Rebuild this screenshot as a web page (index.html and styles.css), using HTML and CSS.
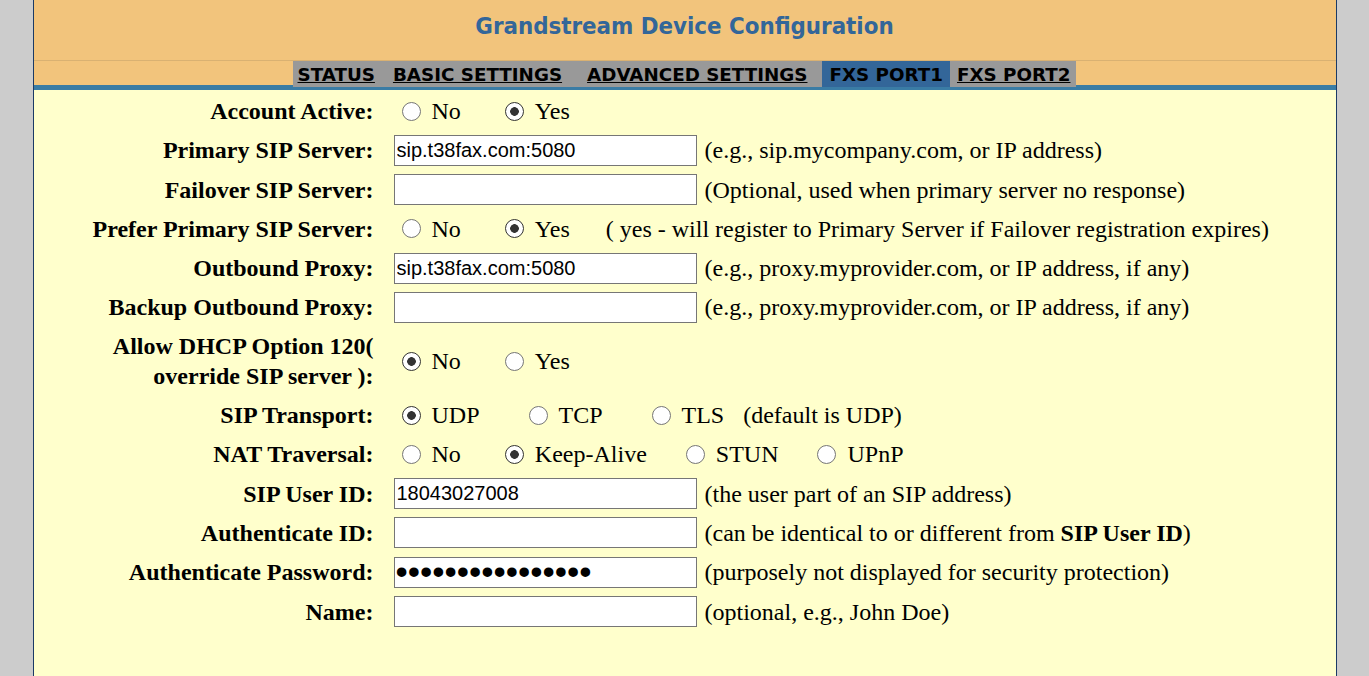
FILE: index.html
```html
<!DOCTYPE html>
<html lang="en">
<head>
<meta charset="utf-8"/>
<title>Grandstream Device Configuration</title>
<link rel="stylesheet" href="styles.css">
<meta content="width=device-width, initial-scale=1.0" name="viewport"/>
</head>
<body>
<div class="page">
  <div class="header">
    <h1>Grandstream Device Configuration</h1>
  </div>
  <nav class="tabs">
    <a class="tab" href="#">STATUS</a>
    <a class="tab" href="#">BASIC SETTINGS</a>
    <a class="tab" href="#">ADVANCED SETTINGS</a>
    <span class="tab tab-active">FXS PORT1</span>
    <a class="tab" href="#">FXS PORT2</a>
  </nav>

  <form class="config">
    <div class="label">Account Active:</div>
    <div class="field">
      <label class="opt"><input type="radio" name="active">No</label>
      <label class="opt"><input type="radio" name="active" checked>Yes</label>
    </div>

    <div class="label">Primary SIP Server:</div>
    <div class="field">
      <input class="text" type="text" value="sip.t38fax.com:5080">
      <span class="hint">(e.g., sip.mycompany.com, or IP address)</span>
    </div>

    <div class="label">Failover SIP Server:</div>
    <div class="field">
      <input class="text" type="text" value="">
      <span class="hint">(Optional, used when primary server no response)</span>
    </div>

    <div class="label">Prefer Primary SIP Server:</div>
    <div class="field">
      <label class="opt"><input type="radio" name="prefer">No</label>
      <label class="opt"><input type="radio" name="prefer" checked>Yes</label>
      <span>( yes - will register to Primary Server if Failover registration expires)</span>
    </div>

    <div class="label">Outbound Proxy:</div>
    <div class="field">
      <input class="text" type="text" value="sip.t38fax.com:5080">
      <span class="hint">(e.g., proxy.myprovider.com, or IP address, if any)</span>
    </div>

    <div class="label">Backup Outbound Proxy:</div>
    <div class="field">
      <input class="text" type="text" value="">
      <span class="hint">(e.g., proxy.myprovider.com, or IP address, if any)</span>
    </div>

    <div class="label">Allow DHCP Option 120(<br>override SIP server ):</div>
    <div class="field">
      <label class="opt"><input type="radio" name="dhcp" checked>No</label>
      <label class="opt"><input type="radio" name="dhcp">Yes</label>
    </div>

    <div class="label">SIP Transport:</div>
    <div class="field">
      <label class="opt opt-wide"><input type="radio" name="transport" checked>UDP</label>
      <label class="opt opt-wide"><input type="radio" name="transport">TCP</label>
      <label class="opt opt-close"><input type="radio" name="transport">TLS</label>
      <span>(default is UDP)</span>
    </div>

    <div class="label">NAT Traversal:</div>
    <div class="field">
      <label class="opt"><input type="radio" name="nat">No</label>
      <label class="opt opt-mid"><input type="radio" name="nat" checked>Keep-Alive</label>
      <label class="opt opt-mid"><input type="radio" name="nat">STUN</label>
      <label class="opt"><input type="radio" name="nat">UPnP</label>
    </div>

    <div class="label">SIP User ID:</div>
    <div class="field">
      <input class="text" type="text" value="18043027008">
      <span class="hint">(the user part of an SIP address)</span>
    </div>

    <div class="label">Authenticate ID:</div>
    <div class="field">
      <input class="text" type="text" value="">
      <span class="hint">(can be identical to or different from <b>SIP User ID</b>)</span>
    </div>

    <div class="label">Authenticate Password:</div>
    <div class="field">
      <input class="text pw" type="password" value="abcdefghijklmnop">
      <span class="hint">(purposely not displayed for security protection)</span>
    </div>

    <div class="label">Name:</div>
    <div class="field">
      <input class="text" type="text" value="">
      <span class="hint">(optional, e.g., John Doe)</span>
    </div>
  </form>
</div>
</body>
</html>
```

FILE: styles.css
```css
body {
  margin: 0;
  background: #cccccc;
  font-family: 'Liberation Serif', 'Times New Roman', serif;
  font-size: 24px;
  color: #000;
}
.page {
  width: 1302px;
  min-height: 100vh;
  margin: 0 auto;
  background: #ffffcc;
  border-left: 1px solid #1b3a66;
  border-right: 1px solid #1b3a66;
}
.header {
  height: 60px;
  background: #f2c47c;
  border-bottom: 1px solid #d9b172;
}
.header h1 {
  margin: 0;
  padding-top: 11px;
  text-align: center;
  font-family: 'DejaVu Sans Condensed', 'DejaVu Sans', sans-serif;
  font-stretch: condensed;
  font-size: 23.8px;
  line-height: 30px;
  color: #336699;
}
.tabs {
  display: flex;
  justify-content: center;
  align-items: flex-start;
  height: 24px;
  background: #f2c47c;
  border-bottom: 5px solid #3a7ca5;
}
.tab {
  height: 26px;
  line-height: 27px;
  background: #999999;
  font-family: 'DejaVu Sans', sans-serif;
  font-size: 18.3px;
  font-weight: bold;
  color: #000;
  white-space: nowrap;
}
.tab:nth-child(1) { padding: 0 10px 0 5px; }
.tab:nth-child(2) { padding: 0 13px 0 8px; }
.tab:nth-child(3) { padding: 0 15px 0 12px; }
.tab:nth-child(4) { padding: 0 7px 0 7px; }
.tab:nth-child(5) { padding: 0 6px 0 7px; }
.tab-active { background: #336699; }

.config {
  display: grid;
  grid-template-columns: 340px 1fr;
  column-gap: 20px;
  row-gap: 8.3px;
  padding: 5.5px 0 40px;
  margin: 0;
}
.label {
  align-self: center;
  text-align: right;
  font-weight: bold;
  line-height: 30px;
}
.field {
  display: flex;
  align-items: center;
  min-height: 31px;
  line-height: 30px;
  white-space: nowrap;
}
.text {
  box-sizing: border-box;
  width: 303px;
  height: 31px;
  margin: 0;
  padding: 0 2px;
  border: 1px solid #767676;
  background: #fff;
  font-family: 'Liberation Sans', Arial, sans-serif;
  font-size: 20px;
  color: #000;
}
.text.pw { font-size: 35px; padding: 0 1px; }
.hint { margin-left: 8px; }

.opt {
  display: inline-flex;
  align-items: center;
  margin-right: 36px;
}
.opt-mid { margin-right: 31px; }
.opt-wide { margin-right: 41px; }
.opt-close { margin-right: 19px; }
.opt input {
  appearance: none;
  -webkit-appearance: none;
  box-sizing: border-box;
  width: 19px;
  height: 19px;
  margin: 0 11px 0 8px;
  border: 1px solid #767676;
  border-radius: 50%;
  background: #fff;
}
.opt input:checked {
  border-color: #333;
  background: radial-gradient(circle, #333 0 4px, #fff 4.6px);
}
```
